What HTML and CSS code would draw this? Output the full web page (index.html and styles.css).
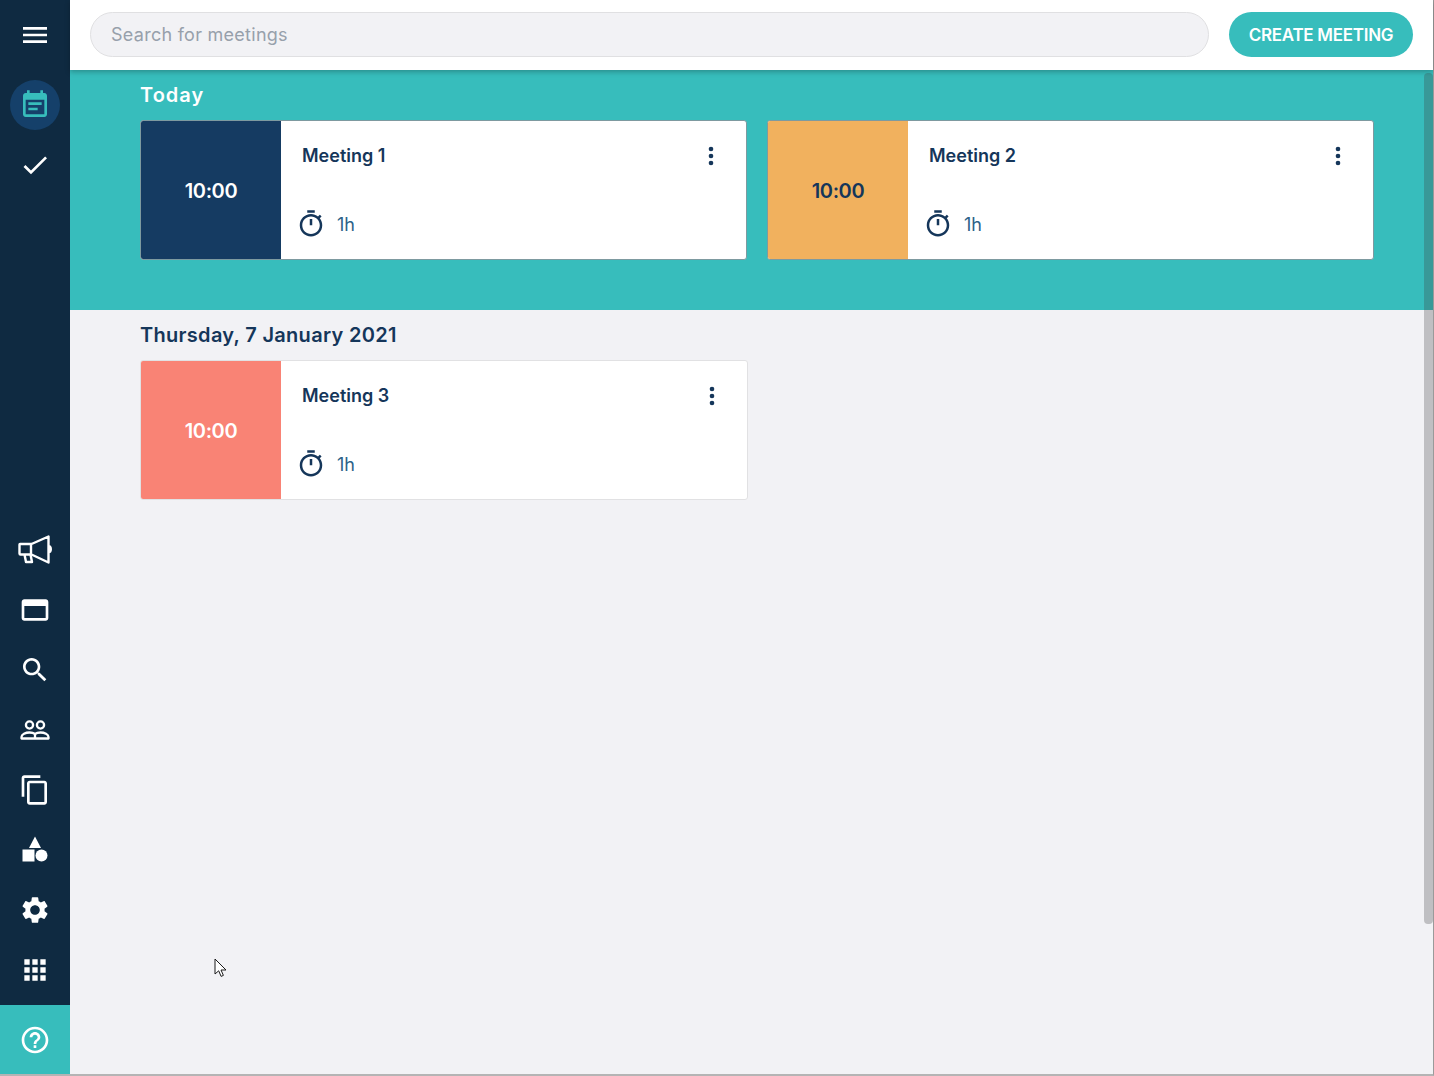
FILE: index.html
```html
<!DOCTYPE html>
<html lang="en">
<head>
<meta charset="utf-8">
<title>Meetings</title>
<link rel="stylesheet" href="styles.css">
</head>
<body>
<div class="app">
  <aside class="sidebar">
    <nav class="nav-top">
      <div class="nav-item"><svg class="ico" viewBox="0 0 24 24"><path d="M3 18h18v-2H3v2zm0-5h18v-2H3v2zm0-7v2h18V6H3z"/></svg></div>
      <div class="nav-item"><span class="active-pill"><svg class="ico ico-teal" viewBox="0 0 24 24"><path d="M17 10H7v2h10v-2zm2-7h-1V1h-2v2H8V1H6v2H5c-1.11 0-1.99.9-1.99 2L3 19c0 1.1.89 2 2 2h14c1.1 0 2-.9 2-2V5c0-1.1-.9-2-2-2zm0 16H5V8h14v11zm-5-5H7v2h7v-2z"/></svg></span></div>
      <div class="nav-item"><svg class="ico" viewBox="0 0 24 24"><path d="M9 16.17L4.83 12l-1.42 1.41L9 19 21 7l-1.41-1.41z"/></svg></div>
    </nav>
    <nav class="nav-bottom">
      <div class="nav-item"><svg class="ico ico-line" viewBox="0 0 36 32"><path d="M3 10h11.500L31.500 2.500v26L14.500 20.500H3.500c-.6 0-1-.4-1-1v-9c0-.3.2-.5.5-.5zM14 10v10.500M7.500 20.500l1.500 7.500h6l-1.500-7.500M31.500 12c1.800.5 2.300 1.700 2.300 3.300s-.5 2.800-2.300 3.300"/></svg></div>
      <div class="nav-item"><svg class="ico" viewBox="0 0 24 24"><path d="M20 4H4c-1.110 0-1.990.89-1.990 2L2 18c0 1.110.89 2 2 2h16c1.110 0 2-.89 2-2V6c0-1.110-.89-2-2-2zm0 14H4V9h16v9z"/></svg></div>
      <div class="nav-item"><svg class="ico" viewBox="0 0 24 24"><path d="M15.500 14h-.79l-.28-.27C15.410 12.590 16 11.110 16 9.500 16 5.910 13.090 3 9.500 3S3 5.910 3 9.500 5.910 16 9.500 16c1.610 0 3.090-.59 4.230-1.570l.27.28v.79l5 4.990L20.490 19l-4.990-5zm-6 0C7.010 14 5 11.990 5 9.500S7.010 5 9.500 5 14 7.010 14 9.500 11.990 14 9.500 14z"/></svg></div>
      <div class="nav-item"><svg class="ico ico-line ico-thin" viewBox="0 0 32 32"><circle cx="10.500" cy="11" r="3.600"/><circle cx="21.500" cy="11" r="3.600"/><path d="M2.500 24.500v-1.500c0-2.500 4-4.500 8-4.500 2.300 0 4.300.6 5.500 1.500 1.200-.9 3.200-1.500 5.500-1.500 4 0 8 2 8 4.500v1.500zM16 20V24.500"/></svg></div>
      <div class="nav-item"><svg class="ico" viewBox="0 0 24 24"><path d="M16 1H4c-1.100 0-2 .9-2 2v14h2V3h12V1zm3 4H8c-1.100 0-2 .9-2 2v14c0 1.100.9 2 2 2h11c1.100 0 2-.9 2-2V7c0-1.100-.9-2-2-2zm0 16H8V7h11v14z"/></svg></div>
      <div class="nav-item"><svg class="ico" viewBox="0 0 32 32"><path d="M16 2.500l6 11.500H10z"/><rect x="3.500" y="15.500" width="12" height="12"/><circle cx="22.500" cy="21.500" r="6"/></svg></div>
      <div class="nav-item"><svg class="ico" viewBox="0 0 24 24"><path d="M19.140 12.940c.04-.3.06-.61.06-.94 0-.32-.02-.64-.07-.94l2.030-1.580c.18-.14.23-.41.12-.61l-1.920-3.320c-.12-.22-.37-.29-.59-.22l-2.390.96c-.5-.38-1.030-.7-1.620-.94l-.36-2.540c-.04-.24-.24-.41-.48-.41h-3.840c-.24 0-.43.17-.47.41l-.36 2.540c-.59.24-1.130.57-1.620.94l-2.390-.96c-.22-.08-.47 0-.59.22L2.740 8.870c-.12.21-.08.47.12.61l2.030 1.580c-.05.3-.09.63-.09.94s.02.64.07.94l-2.030 1.580c-.18.14-.23.41-.12.61l1.920 3.320c.12.22.37.29.59.22l2.390-.96c.5.38 1.030.7 1.620.94l.36 2.540c.05.24.24.41.48.41h3.840c.24 0 .44-.17.47-.41l.36-2.540c.59-.24 1.130-.56 1.620-.94l2.390.96c.22.08.47 0 .59-.22l1.920-3.320c.12-.22.07-.47-.12-.61l-2.010-1.580zM12 15.600c-1.980 0-3.600-1.620-3.600-3.600s1.620-3.600 3.600-3.600 3.600 1.620 3.600 3.600-1.620 3.600-3.600 3.600z"/></svg></div>
      <div class="nav-item"><svg class="ico" viewBox="0 0 24 24"><path d="M4 8h4V4H4v4zm6 12h4v-4h-4v4zm-6 0h4v-4H4v4zm0-6h4v-4H4v4zm6 0h4v-4h-4v4zm6-10v4h4V4h-4zm-6 4h4V4h-4v4zm6 6h4v-4h-4v4zm0 6h4v-4h-4v4z"/></svg></div>
    </nav>
    <div class="help"><svg class="ico" viewBox="0 0 24 24"><path d="M11 18h2v-2h-2v2zm1-16C6.480 2 2 6.480 2 12s4.480 10 10 10 10-4.480 10-10S17.520 2 12 2zm0 18c-4.410 0-8-3.590-8-8s3.590-8 8-8 8 3.590 8 8-3.590 8-8 8zm0-14c-2.210 0-4 1.790-4 4h2c0-1.100.9-2 2-2s2 .9 2 2c0 2-3 1.750-3 5h2c0-2.250 3-2.500 3-5 0-2.210-1.790-4-4-4z"/></svg></div>
  </aside>

  <main class="main">
    <header class="topbar">
      <div class="search">Search for meetings</div>
      <button class="create">CREATE MEETING</button>
    </header>

    <section class="day day-today">
      <h2 class="day-title">Today</h2>
      <div class="cards">
        <article class="card">
          <div class="time time-navy">10:00</div>
          <div class="info">
            <div class="info-head"><span class="name">Meeting 1</span><svg class="more" viewBox="0 0 24 24"><circle cx="12" cy="6" r="2"/><circle cx="12" cy="12" r="2"/><circle cx="12" cy="18" r="2"/></svg></div>
            <div class="dur"><svg class="timer" viewBox="0 0 24 24"><path d="M9 1h6v2H9zm10.030 6.390l1.420-1.420c-.43-.51-.9-.99-1.410-1.410l-1.420 1.420C16.070 4.740 14.120 4 12 4c-4.970 0-9 4.030-9 9s4.020 9 9 9 9-4.030 9-9c0-2.120-.74-4.070-1.970-5.610zM12 20c-3.870 0-7-3.130-7-7s3.130-7 7-7 7 3.130 7 7-3.130 7-7 7zm-1-12h2v5h-2z"/></svg><span>1h</span></div>
          </div>
        </article>
        <article class="card">
          <div class="time time-amber">10:00</div>
          <div class="info">
            <div class="info-head"><span class="name">Meeting 2</span><svg class="more" viewBox="0 0 24 24"><circle cx="12" cy="6" r="2"/><circle cx="12" cy="12" r="2"/><circle cx="12" cy="18" r="2"/></svg></div>
            <div class="dur"><svg class="timer" viewBox="0 0 24 24"><path d="M9 1h6v2H9zm10.030 6.390l1.420-1.420c-.43-.51-.9-.99-1.410-1.410l-1.420 1.420C16.070 4.740 14.120 4 12 4c-4.970 0-9 4.030-9 9s4.020 9 9 9 9-4.030 9-9c0-2.120-.74-4.070-1.970-5.610zM12 20c-3.870 0-7-3.130-7-7s3.130-7 7-7 7 3.130 7 7-3.130 7-7 7zm-1-12h2v5h-2z"/></svg><span>1h</span></div>
          </div>
        </article>
      </div>
    </section>

    <section class="day day-later">
      <h2 class="day-title">Thursday, 7 January 2021</h2>
      <div class="cards">
        <article class="card card-light">
          <div class="time time-coral">10:00</div>
          <div class="info">
            <div class="info-head"><span class="name">Meeting 3</span><svg class="more" viewBox="0 0 24 24"><circle cx="12" cy="6" r="2"/><circle cx="12" cy="12" r="2"/><circle cx="12" cy="18" r="2"/></svg></div>
            <div class="dur"><svg class="timer" viewBox="0 0 24 24"><path d="M9 1h6v2H9zm10.030 6.390l1.420-1.420c-.43-.51-.9-.99-1.410-1.410l-1.420 1.420C16.070 4.740 14.120 4 12 4c-4.970 0-9 4.030-9 9s4.020 9 9 9 9-4.030 9-9c0-2.120-.74-4.070-1.970-5.610zM12 20c-3.870 0-7-3.130-7-7s3.130-7 7-7 7 3.130 7 7-3.130 7-7 7zm-1-12h2v5h-2z"/></svg><span>1h</span></div>
          </div>
        </article>
      </div>
    </section>
  </main>
  <div class="scroll-thumb"></div>
  <svg class="cursor" viewBox="0 0 14 20"><path d="M1 1v15l3.700-3.200 2.400 5.600 2.300-1-2.400-5.400H12z"/></svg>
</div>
</body>
</html>
```

FILE: styles.css
```css
* { box-sizing: border-box; }
html, body { margin: 0; height: 100%; overflow: hidden; }
body { background: #fff; font-family: Inter, "Noto Sans", "Liberation Sans", sans-serif; color: #15365a; }

.app {
  position: relative;
  display: flex;
  height: 1076px;
  width: 1434px;
  border-bottom: 2px solid #b4b4b4;
  border-right: 1px solid #9a9a9a;
  background: #f2f2f5;
}

.sidebar {
  width: 70px;
  flex: none;
  display: flex;
  flex-direction: column;
  background: #0f2a41;
}
.nav-top { padding-top: 5px; }
.nav-bottom { margin-top: auto; margin-bottom: 5px; }
.nav-item { height: 60px; display: flex; align-items: center; justify-content: center; }
.nav-top .nav-item:nth-child(2) { margin-top: 10px; }
.ico { width: 32px; height: 32px; fill: #fff; display: block; }
.ico-teal { fill: #37bdbc; }
.ico-line { fill: none; stroke: #fff; stroke-width: 2.400; stroke-linejoin: round; stroke-linecap: round; width: 36px; height: 32px; }
.ico-thin { width: 32px; height: 32px; stroke-width: 2.300; }
.active-pill {
  width: 50px; height: 50px; border-radius: 50%;
  background: #15406a;
  display: flex; align-items: center; justify-content: center;
}
.help { height: 69px; background: #37bdbc; display: flex; align-items: center; justify-content: center; flex: none; }

.main { flex: 1; min-width: 0; display: flex; flex-direction: column; }

.topbar {
  height: 70px;
  flex: none;
  background: #fff;
  padding: 12px 20px;
  display: flex;
  align-items: flex-start;
  gap: 20px;
  position: relative;
  box-shadow: 0 2px 5px rgba(0,0,0,.25);
}
.search {
  flex: 1;
  height: 45px;
  border: 1px solid #e0e0e2;
  border-radius: 23px;
  background: #f2f2f5;
  padding-left: 20px;
  padding-bottom: 1px;
  display: flex;
  align-items: center;
  color: #97a0ab;
  font-size: 18px;
  font-weight: 400;
  letter-spacing: .27px;
}
.create {
  width: 184px;
  height: 45px;
  border: 0;
  border-radius: 23px;
  background: #37bdbc;
  color: #fff;
  font: 600 17px Inter, "Noto Sans", sans-serif;
  letter-spacing: -.28px;
  padding: 0;
  white-space: nowrap;
}

.day { padding: 0 60px 0 70px; }
.day-today { height: 240px; background: #37bdbc; }
.day-later { flex: 1; }
.day-title {
  margin: 0;
  height: 50px;
  padding-top: 11px;
  font-size: 20px;
  line-height: 28px;
  font-weight: 600;
  letter-spacing: .3px;
  color: #15365a;
}
.day-today .day-title { color: #fff; letter-spacing: 1px; }

.cards { display: grid; grid-template-columns: 607px 607px; column-gap: 20px; }

.card {
  height: 140px;
  display: flex;
  background: #fff;
  border: 1px solid #7d9aa0;
  border-radius: 3px;
  overflow: hidden;
}
.card-light { border-color: #e1e1e3; margin-right: -1px; }
.time {
  width: 140px;
  flex: none;
  display: flex;
  align-items: center;
  justify-content: center;
  padding-top: 2px;
  font-size: 20px;
  font-weight: 600;
  letter-spacing: -.4px;
}
.time-navy { background: #153b62; color: #fff; }
.time-amber { background: #f1b15e; color: #15365a; }
.time-coral { background: #f98375; color: #fff; }

.info { flex: 1; padding: 0 21px 0 21px; display: flex; flex-direction: column; }
.info-head { height: 88px; display: flex; align-items: flex-start; justify-content: space-between; padding-top: 21px; }
.name { font-size: 18px; line-height: 28px; font-weight: 600; color: #15365a; }
.more { width: 28px; height: 28px; fill: #15365a; }
.dur { display: flex; align-items: center; gap: 11px; margin-left: -6px; color: #2d6288; font-size: 18px; height: 30px; }
.timer { width: 30px; height: 30px; fill: #15365a; }

.scroll-thumb {
  position: absolute;
  right: 0;
  top: 73px;
  width: 9px;
  height: 851px;
  border-radius: 4px;
  background: rgba(60, 60, 60, .28);
}
.cursor {
  position: absolute;
  left: 214px;
  top: 958px;
  width: 14px;
  height: 20px;
  fill: #fff;
  stroke: #1a1a1a;
  stroke-width: 1;
}
```
